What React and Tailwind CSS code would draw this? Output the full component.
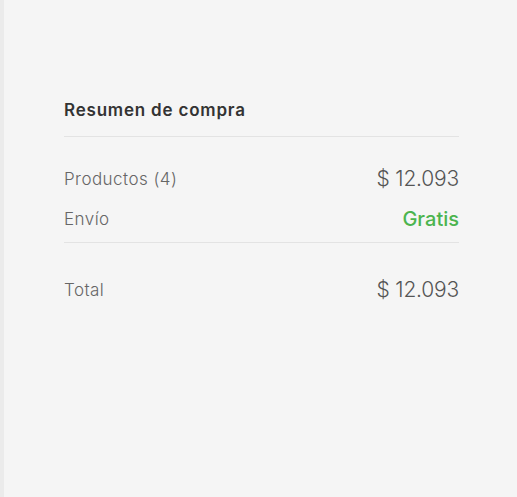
export default function App() {
  return (
    <div className="flex h-[497px] w-[517px] bg-[#f5f5f5] font-['Inter',sans-serif]">
      <div className="w-[4px] bg-[#ebebeb]" />
      <div className="flex-1 pl-[60px] pr-[58px] pt-[98px]">
        <h2 className="border-b border-[#e3e3e3] pb-[14px] text-[17px] font-semibold leading-[24px] tracking-[0.8px] text-[#333]">
          Resumen de compra
        </h2>
        <div className="border-b border-[#e3e3e3] pt-[28px] pb-[9px]">
          <div className="flex items-center justify-between leading-[28px]">
            <span className="text-[17px] font-light tracking-[0.45px] text-[#666]">Productos (4)</span>
            <span className="text-[21px] font-light tracking-[-0.2px] text-[#555]">$ 12.093</span>
          </div>
          <div className="mt-[12px] flex items-center justify-between leading-[28px]">
            <span className="text-[17px] font-light tracking-[0.45px] text-[#666]">Envío</span>
            <span className="text-[20px] font-medium text-[#4bb44e]">Gratis</span>
          </div>
        </div>
        <div className="flex items-center justify-between pt-[33px] leading-[28px]">
          <span className="text-[17px] font-light tracking-[0.45px] text-[#666]">Total</span>
          <span className="text-[21px] font-light tracking-[-0.2px] text-[#555]">$ 12.093</span>
        </div>
      </div>
    </div>
  );
}
